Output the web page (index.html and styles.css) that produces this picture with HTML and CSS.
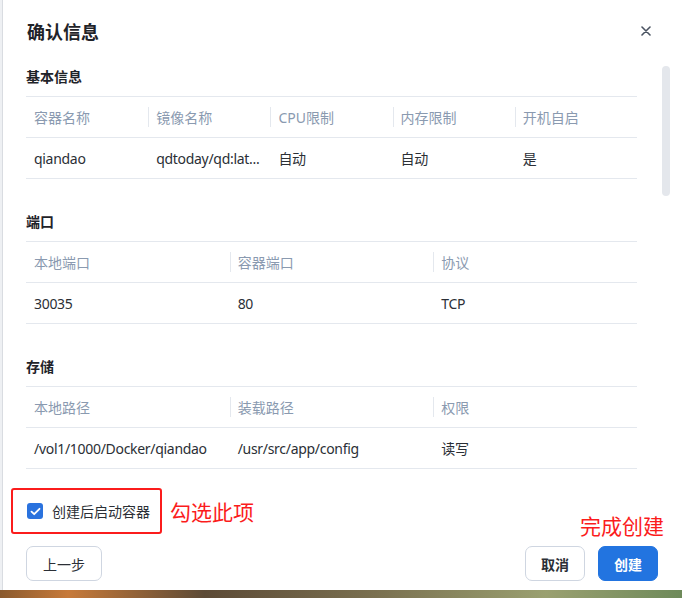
FILE: index.html
```html
<!DOCTYPE html>
<html lang="zh-CN">
<head>
    <meta charset="UTF-8">
    <title>确认信息</title>
    <link rel="stylesheet" href="styles.css">
</head>
<body>
    <div class="dialog">
        <div class="dialog-header">
            <h1>确认信息</h1>
            <span class="close">
                <svg width="10" height="10" viewBox="0 0 10 10"><path d="M1 1L9 9M9 1L1 9" stroke="#4a5361" stroke-width="1.6" stroke-linecap="round"/></svg>
            </span>
        </div>

        <div class="dialog-body">
            <div class="section first">
                <h2>基本信息</h2>
                <table>
                    <thead>
                        <tr>
                            <th>容器名称</th>
                            <th>镜像名称</th>
                            <th>CPU限制</th>
                            <th>内存限制</th>
                            <th>开机自启</th>
                        </tr>
                    </thead>
                    <tbody>
                        <tr>
                            <td>qiandao</td>
                            <td>qdtoday/qd:lat...</td>
                            <td>自动</td>
                            <td>自动</td>
                            <td>是</td>
                        </tr>
                    </tbody>
                </table>
            </div>

            <div class="section">
                <h2>端口</h2>
                <table>
                    <thead>
                        <tr>
                            <th>本地端口</th>
                            <th>容器端口</th>
                            <th>协议</th>
                        </tr>
                    </thead>
                    <tbody>
                        <tr>
                            <td>30035</td>
                            <td>80</td>
                            <td>TCP</td>
                        </tr>
                    </tbody>
                </table>
            </div>

            <div class="section">
                <h2>存储</h2>
                <table>
                    <thead>
                        <tr>
                            <th>本地路径</th>
                            <th>装载路径</th>
                            <th>权限</th>
                        </tr>
                    </thead>
                    <tbody>
                        <tr>
                            <td>/vol1/1000/Docker/qiandao</td>
                            <td>/usr/src/app/config</td>
                            <td>读写</td>
                        </tr>
                    </tbody>
                </table>
            </div>

            <div class="scroll-thumb"></div>
        </div>

        <div class="options">
            <label class="check-box">
                <span class="check">
                    <svg width="11" height="9" viewBox="0 0 11 9"><path d="M1.5 4.6L4.2 7.2L9.5 1.8" fill="none" stroke="#fff" stroke-width="1.8" stroke-linecap="round" stroke-linejoin="round"/></svg>
                </span>
                创建后启动容器
            </label>
            <span class="note">勾选此项</span>
        </div>

        <div class="dialog-footer">
            <span class="note note-create">完成创建</span>
            <button class="btn">上一步</button>
            <div class="spacer"></div>
            <button class="btn bold">取消</button>
            <button class="btn primary">创建</button>
        </div>
    </div>
</body>
</html>
```

FILE: styles.css
```css
* {
    box-sizing: border-box;
    font-family: "Noto Sans", "Noto Sans CJK SC", sans-serif;
}

body {
    margin: 0;
    width: 682px;
    height: 598px;
    overflow: hidden;
    background: #eef0f3 linear-gradient(90deg, #8a5a2e 0%, #c77a3a 10%, #5c4a36 30%, #7a7050 55%, #9aa070 80%, #6e8a5a 100%) left bottom / 100% 8px no-repeat;
}

.dialog {
    display: flex;
    flex-direction: column;
    height: 590px;
    margin-left: 2px;
    background: #fff;
    border-left: 1px solid #d9dce1;
    color: #2b2f36;
}

.dialog-header {
    display: flex;
    align-items: center;
    justify-content: space-between;
    height: 62px;
    padding: 0 31px 0 24px;
}

h1 {
    margin: 0;
    font-size: 18px;
    font-weight: 700;
    color: #1f2329;
}

.close {
    display: flex;
    align-items: center;
}

.dialog-body {
    position: relative;
    flex: 1;
    overflow: hidden;
    padding: 0 45px 0 23px;
}

.section {
    margin-top: 32px;
}

.section.first {
    margin-top: 4px;
}

h2 {
    margin: 0 0 8px 0;
    font-size: 14px;
    line-height: 22px;
    font-weight: 700;
    color: #1f2329;
}

table {
    width: 100%;
    border-collapse: collapse;
    table-layout: fixed;
    border-top: 1px solid #e4e8ee;
}

th, td {
    position: relative;
    height: 41px;
    padding: 0 8px;
    text-align: left;
    font-size: 14px;
    font-weight: 400;
    border-bottom: 1px solid #e4e8ee;
    white-space: nowrap;
    overflow: hidden;
    text-overflow: ellipsis;
}

th {
    color: #8a9ab0;
}

td {
    color: #2b2f36;
    letter-spacing: -0.3px;
}

th + th::before {
    content: "";
    position: absolute;
    left: 0;
    top: 10px;
    bottom: 10px;
    width: 1px;
    background: #e4e8ee;
}

.scroll-thumb {
    position: absolute;
    left: 659px;
    top: 4px;
    width: 8px;
    height: 130px;
    border-radius: 4px;
    background: #e4e7ec;
}

.options {
    display: flex;
    align-items: center;
    padding: 10px 0 0 8px;
}

.check-box {
    display: flex;
    align-items: center;
    gap: 9px;
    height: 46px;
    padding: 0 10px 0 14px;
    border: 2px solid #fb1c1c;
    border-radius: 3px;
    font-size: 14px;
    color: #2b2f36;
}

.check {
    display: flex;
    align-items: center;
    justify-content: center;
    width: 16px;
    height: 16px;
    border-radius: 3px;
    background: #2a72de;
}

.note {
    margin-left: 8px;
    font-size: 21px;
    line-height: 24px;
    color: #fb1c1c;
    font-family: "Noto Sans CJK SC", sans-serif;
}

.dialog-footer {
    position: relative;
    display: flex;
    align-items: center;
    padding: 12px 24px 9px 23px;
}

.note-create {
    position: absolute;
    right: 18px;
    top: -21px;
    margin: 0;
}

.spacer {
    flex: 1;
}

.btn {
    height: 35px;
    padding: 0 16px;
    background: #fff;
    border: 1px solid #cfd6e1;
    border-radius: 7px;
    font-size: 14px;
    color: #2b2f36;
}

.btn.bold {
    font-weight: 700;
    padding: 0 15px;
    margin-right: 13px;
}

.btn.primary {
    background: #2274e0;
    border-color: #2274e0;
    color: #fff;
    font-weight: 700;
    padding: 0 15px;
}
```
